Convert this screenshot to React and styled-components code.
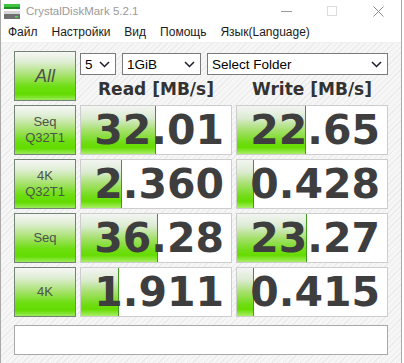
import React from 'react';
import styled, { createGlobalStyle } from 'styled-components';

const GlobalStyle = createGlobalStyle`
  html, body {
    margin: 0;
    padding: 0;
    background: #ffffff;
  }
  body {
    font-family: "Liberation Sans", Arial, sans-serif;
  }
`;

const results = [
  { label: ['Seq', 'Q32T1'], read: '32.01', readBar: 75, write: '22.65', writeBar: 69 },
  { label: ['4K', 'Q32T1'], read: '2.360', readBar: 41, write: '0.428', writeBar: 17 },
  { label: ['Seq'], read: '36.28', readBar: 77, write: '23.27', writeBar: 70 },
  { label: ['4K'], read: '1.911', readBar: 38, write: '0.415', writeBar: 17 }
];

function AppIcon() {
  return (
    <svg width="16" height="16" viewBox="0 0 16 16">
      <rect x="0" y="0" width="16" height="3" fill="#3fc43f" />
      <rect x="0" y="3" width="16" height="2" fill="#1f8f2a" />
      <rect x="0" y="7" width="16" height="3" fill="#d6d6d6" />
      <rect x="0" y="10" width="16" height="5" fill="#6f6f6f" />
      <rect x="11" y="12" width="3" height="1.5" fill="#48e048" />
    </svg>
  );
}

function Chevron() {
  return (
    <svg width="11" height="7" viewBox="0 0 11 7">
      <path d="M1 1 L5.5 5.5 L10 1" fill="none" stroke="#1c1c2c" strokeWidth="1.5" />
    </svg>
  );
}

function App() {
  return (
    <>
      <GlobalStyle />
      <Window>
        <TitleBar>
          <IconWrap>
            <AppIcon />
          </IconWrap>
          <Title>CrystalDiskMark 5.2.1</Title>
          <Controls>
            <CtrlButton>
              <svg width="11" height="1" viewBox="0 0 11 1">
                <rect width="11" height="1" fill="#9a9a9a" />
              </svg>
            </CtrlButton>
            <CtrlButton>
              <svg width="10" height="10" viewBox="0 0 10 10">
                <rect x="0.5" y="0.5" width="9" height="9" fill="none" stroke="#dcdcdc" />
              </svg>
            </CtrlButton>
            <CtrlButton>
              <svg width="11" height="11" viewBox="0 0 11 11">
                <path d="M0.5 0.5 L10.5 10.5 M10.5 0.5 L0.5 10.5" stroke="#8a8a8a" strokeWidth="1" />
              </svg>
            </CtrlButton>
          </Controls>
        </TitleBar>
        <MenuBar>
          <MenuItem>Файл</MenuItem>
          <MenuItem>Настройки</MenuItem>
          <MenuItem>Вид</MenuItem>
          <MenuItem>Помощь</MenuItem>
          <MenuItem>Язык(Language)</MenuItem>
        </MenuBar>
        <Content>
          <Grid>
            <LabelButton $big>All</LabelButton>
            <TopPanel>
              <SelectRow>
                <Select $w={36}>
                  <span>5</span>
                  <Chevron />
                </Select>
                <Select $w={79}>
                  <span>1GiB</span>
                  <Chevron />
                </Select>
                <Select $w={181}>
                  <span>Select Folder</span>
                  <Chevron />
                </Select>
              </SelectRow>
              <HeaderRow>
                <Header>Read [MB/s]</Header>
                <Header>Write [MB/s]</Header>
              </HeaderRow>
            </TopPanel>
            {results.map((r, i) => (
              <React.Fragment key={i}>
                <LabelButton>
                  {r.label.map((l) => (
                    <LabelLine key={l}>{l}</LabelLine>
                  ))}
                </LabelButton>
                <ValueBox>
                  <Bar style={{ width: r.readBar + 'px' }} />
                  <Value>{r.read}</Value>
                </ValueBox>
                <ValueBox>
                  <Bar style={{ width: r.writeBar + 'px' }} />
                  <Value>{r.write}</Value>
                </ValueBox>
              </React.Fragment>
            ))}
          </Grid>
          <CommentBox />
        </Content>
      </Window>
    </>
  );
}

export default App;

const Window = styled.div`
  width: 402px;
  height: 363px;
  box-sizing: border-box;
  border-left: 1px solid #a9a9a9;
  border-right: 1px solid #a9a9a9;
  display: flex;
  flex-direction: column;
  overflow: hidden;
  background: #ffffff;
`;

const TitleBar = styled.div`
  height: 22px;
  display: flex;
  align-items: center;
  background: #ffffff;
`;

const IconWrap = styled.div`
  display: flex;
  margin-left: 3px;
  margin-top: 1px;
`;

const Title = styled.div`
  margin-left: 6px;
  font-size: 11.5px;
  color: #9a9a9a;
`;

const Controls = styled.div`
  margin-left: auto;
  display: flex;
  height: 100%;
`;

const CtrlButton = styled.div`
  width: 46px;
  display: flex;
  align-items: center;
  justify-content: center;
`;

const MenuBar = styled.div`
  height: 20px;
  display: flex;
  align-items: center;
  gap: 14px;
  padding-left: 7px;
  background: #ffffff;
  border-bottom: 1px solid #f0f0f0;
`;

const MenuItem = styled.div`
  font-size: 12px;
  color: #1a1a1a;
`;

const Content = styled.div`
  flex: 1;
  padding: 8px 0 0 13px;
  background: repeating-linear-gradient(
    -45deg,
    #f6f6f6 0px,
    #f6f6f6 3px,
    #ebebeb 3px,
    #ebebeb 4px
  );
`;

const Grid = styled.div`
  display: grid;
  grid-template-columns: 62px 152px 152px;
  grid-template-rows: repeat(5, 50px);
  column-gap: 4px;
  row-gap: 4px;
`;

const LabelButton = styled.div`
  box-sizing: border-box;
  border: 1px solid #748474;
  background: linear-gradient(
    to bottom,
    #f6f7f5 0%,
    #e0eed5 20%,
    #a8e270 48%,
    #6ede12 72%,
    #62dc00 88%,
    #9bea5a 100%
  );
  display: flex;
  flex-direction: column;
  align-items: center;
  justify-content: center;
  color: #4e524e;
  font-family: "Liberation Sans", Arial, sans-serif;
  font-size: ${(p) => (p.$big ? '18px' : '13px')};
  font-style: ${(p) => (p.$big ? 'italic' : 'normal')};
`;

const LabelLine = styled.div`
  line-height: 16px;
`;

const TopPanel = styled.div`
  grid-column: 2 / 4;
  display: flex;
  flex-direction: column;
`;

const SelectRow = styled.div`
  display: flex;
  gap: 6px;
  margin-top: 2px;
`;

const Select = styled.div`
  width: ${(p) => p.$w}px;
  height: 22px;
  box-sizing: border-box;
  border: 1px solid #7a7a7a;
  background: #ffffff;
  display: flex;
  align-items: center;
  justify-content: space-between;
  padding: 0 5px 0 4px;
  font-size: 13.5px;
  color: #000000;
`;

const HeaderRow = styled.div`
  display: grid;
  grid-template-columns: 152px 152px;
  column-gap: 4px;
  flex: 1;
`;

const Header = styled.div`
  display: flex;
  align-items: center;
  justify-content: center;
  padding-top: 2px;
  font-family: "DejaVu Sans", Verdana, sans-serif;
  font-weight: bold;
  font-size: 17px;
  color: #333333;
`;

const ValueBox = styled.div`
  position: relative;
  box-sizing: border-box;
  border: 1px solid #cdcdcd;
  background: #ffffff;
  overflow: hidden;
`;

const Bar = styled.div`
  position: absolute;
  left: 0;
  top: 0;
  bottom: 0;
  box-sizing: border-box;
  border-right: 1px solid #3f9a1e;
  background: linear-gradient(
    to bottom,
    #f3f5f2 0%,
    #dcebd2 25%,
    #a6e06e 50%,
    #72dc18 75%,
    #66dc00 86%,
    #a8ee66 100%
  );
`;

const Value = styled.div`
  position: relative;
  height: 100%;
  display: flex;
  align-items: center;
  justify-content: flex-end;
  padding-right: 7px;
  font-family: "DejaVu Sans", Verdana, sans-serif;
  font-weight: bold;
  font-size: 41px;
  color: #3e3e3e;
`;

const CommentBox = styled.div`
  width: 374px;
  height: 30px;
  box-sizing: border-box;
  margin-top: 8px;
  border: 1px solid #a8a8a8;
  background: #ffffff;
`;
